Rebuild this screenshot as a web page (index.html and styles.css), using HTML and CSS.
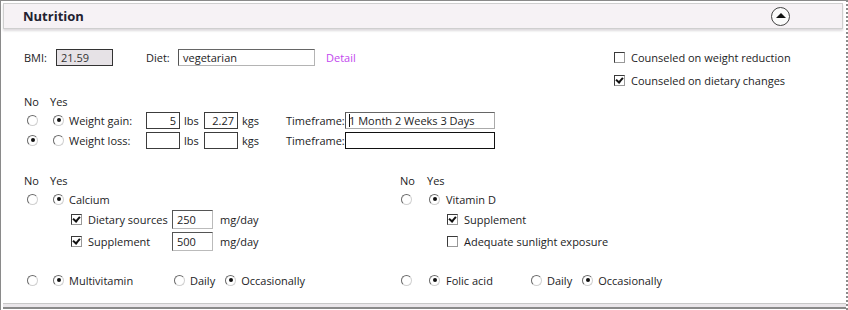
FILE: index.html
```html
<!DOCTYPE html>
<html lang="en">
<head>
  <meta charset="UTF-8">
  <title>Nutrition</title>
  <link rel="stylesheet" href="styles.css">
</head>
<body>
  <div class="frame">
    <div class="panel-head">
      <span class="panel-title">Nutrition</span>
      <span class="collapse-btn"><span class="tri"></span></span>
    </div>

    <div class="panel-body">
      <div class="top-row">
        <span class="lbl lbl-bmi">BMI:</span>
        <span class="field field-bmi">21.59</span>
        <span class="lbl lbl-diet">Diet:</span>
        <span class="field field-diet">vegetarian</span>
        <a class="detail-link">Detail</a>

        <div class="counsel">
          <div class="check-line"><span class="chk"></span>Counseled on weight reduction</div>
          <div class="check-line"><span class="chk on"></span>Counseled on dietary changes</div>
        </div>
      </div>

      <div class="weight">
        <div class="ny-head"><span class="ny-no">No</span><span>Yes</span></div>
        <div class="w-row">
          <span class="rcell"><span class="radio"></span></span>
          <span class="rcell yes"><span class="radio on"></span></span>
          <span class="w-label">Weight gain:</span>
          <span class="field field-num">5</span>
          <span class="unit lbs">lbs</span>
          <span class="field field-num">2.27</span>
          <span class="unit kgs">kgs</span>
          <span class="tf-label">Timeframe:</span>
          <span class="field field-tf light"><span class="caret"></span>1 Month 2 Weeks 3 Days</span>
        </div>
        <div class="w-row">
          <span class="rcell"><span class="radio on"></span></span>
          <span class="rcell yes"><span class="radio"></span></span>
          <span class="w-label">Weight loss:</span>
          <span class="field field-num"></span>
          <span class="unit lbs">lbs</span>
          <span class="field field-num"></span>
          <span class="unit kgs">kgs</span>
          <span class="tf-label">Timeframe:</span>
          <span class="field field-tf dark"></span>
        </div>
      </div>

      <div class="supp">
        <div class="supp-col left">
          <div class="ny-head"><span class="ny-no">No</span><span>Yes</span></div>
          <div class="s-row">
            <span class="rcell"><span class="radio"></span></span>
            <span class="rcell yes"><span class="radio on"></span></span>
            <span>Calcium</span>
          </div>
          <div class="sub-row first">
            <span class="chk on"></span><span class="sub-label">Dietary sources</span>
            <span class="field field-mg">250</span><span class="unit">mg/day</span>
          </div>
          <div class="sub-row">
            <span class="chk on"></span><span class="sub-label">Supplement</span>
            <span class="field field-mg">500</span><span class="unit">mg/day</span>
          </div>
          <div class="s-row freq-row">
            <span class="rcell"><span class="radio"></span></span>
            <span class="rcell yes"><span class="radio on"></span></span>
            <span class="freq-name">Multivitamin</span>
            <span class="radio"></span><span class="opt">Daily</span>
            <span class="radio on"></span><span class="opt">Occasionally</span>
          </div>
        </div>

        <div class="supp-col right">
          <div class="ny-head"><span class="ny-no">No</span><span>Yes</span></div>
          <div class="s-row">
            <span class="rcell"><span class="radio"></span></span>
            <span class="rcell yes"><span class="radio on"></span></span>
            <span>Vitamin D</span>
          </div>
          <div class="sub-row first">
            <span class="chk on"></span><span>Supplement</span>
          </div>
          <div class="sub-row">
            <span class="chk"></span><span>Adequate sunlight exposure</span>
          </div>
          <div class="s-row freq-row">
            <span class="rcell"><span class="radio"></span></span>
            <span class="rcell yes"><span class="radio on"></span></span>
            <span class="freq-name">Folic acid</span>
            <span class="radio"></span><span class="opt">Daily</span>
            <span class="radio on"></span><span class="opt">Occasionally</span>
          </div>
        </div>
      </div>
    </div>

    <div class="panel-foot"></div>
  </div>
</body>
</html>
```

FILE: styles.css
```css
body {
  margin: 0;
  font-family: "Open Sans", "Noto Sans", sans-serif;
  font-size: 11px;
  color: #1c1c24;
  background: #fff;
}

.frame {
  width: 845px;
  height: 309px;
  border-top: 1px solid #8a8a8a;
  border-left: 1px solid #8a8a8a;
  border-right: 2px dotted #8a8a8a;
  position: relative;
  overflow: hidden;
}

.panel-head {
  margin: 2px 3px 0 2px;
  height: 24px;
  border: 1px solid #cfcfcf;
  background: #f6f2f5;
  box-shadow: 0 2px 2px #dedbde;
  display: flex;
  align-items: center;
  justify-content: space-between;
  padding: 0 52px 0 19px;
}

.panel-title {
  font-weight: bold;
  font-size: 13px;
  color: #222230;
}

.collapse-btn {
  width: 17px;
  height: 17px;
  border: 1px solid #444;
  border-radius: 50%;
  background: #fbfbfb;
  display: flex;
  align-items: center;
  justify-content: center;
}

.tri {
  width: 0;
  height: 0;
  border-left: 5px solid transparent;
  border-right: 5px solid transparent;
  border-bottom: 5px solid #111;
  margin-top: -1px;
}

.panel-body {
  padding: 20px 0 0 23px;
}

.top-row {
  display: flex;
  align-items: flex-start;
  height: 42px;
}

.lbl {
  line-height: 17px;
}

.lbl-bmi { width: 32px; }
.lbl-diet { width: 32px; margin-left: 33px; }

.field {
  height: 17px;
  box-sizing: border-box;
  line-height: 15px;
  padding: 0 4px;
  border: 1px solid #3c3c3c;
  background: #fff;
  display: inline-block;
  white-space: nowrap;
  flex: none;
}

.field-bmi {
  width: 57px;
  background: #e6e2e6;
  border-color: #333;
  color: #333;
}

.field-diet {
  width: 137px;
  border-color: #b4b4b4;
  border-left-color: #555;
  border-top-color: #666;
}

.detail-link {
  margin-left: 11px;
  line-height: 17px;
  color: #c247ee;
}

.counsel {
  margin-left: auto;
  width: 232px;
  margin-top: -3px;
}

.check-line {
  display: flex;
  align-items: center;
  height: 23px;
}

.check-line .chk { margin-right: 6px; }

.chk {
  width: 11px;
  height: 11px;
  box-sizing: border-box;
  border: 1px solid #3a3a3a;
  border-right-color: #999;
  border-bottom-color: #999;
  background: #fff;
  display: inline-flex;
  align-items: center;
  justify-content: center;
  flex: none;
}

.chk.on::after {
  content: "";
  width: 5px;
  height: 3px;
  border-left: 2px solid #111;
  border-bottom: 2px solid #111;
  transform: rotate(-50deg);
  margin-top: -2px;
}

.radio {
  width: 11px;
  height: 11px;
  box-sizing: border-box;
  border-radius: 50%;
  border: 1px solid #6a6a6a;
  border-right-color: #d0d0d0;
  border-bottom-color: #d0d0d0;
  background: #fff;
  display: inline-flex;
  align-items: center;
  justify-content: center;
  flex: none;
}

.radio.on::after {
  content: "";
  width: 4px;
  height: 4px;
  border-radius: 50%;
  background: #111;
}

.weight {
  margin-top: 3px;
}

.ny-head {
  display: flex;
  height: 15px;
  line-height: 15px;
}

.ny-no { width: 26px; }

.rcell {
  width: 26px;
  padding-left: 3px;
  box-sizing: border-box;
  display: inline-flex;
  align-items: center;
  flex: none;
}

.rcell.yes { width: 19px; }

.w-row {
  display: flex;
  align-items: center;
  height: 20px;
}

.ny-head + .w-row { margin-top: 1px; }

.w-label { width: 77px; flex: none; }

.field-num {
  width: 34px;
  text-align: right;
  padding: 0 3px;
}

.unit { margin: 0 5px 0 4px; }

.unit.lbs { width: 16px; margin: 0 4px 0 4px; }
.unit.kgs { width: 20px; margin: 0 0 0 4px; }

.tf-label {
  margin-left: 24px;
  width: 59px;
  flex: none;
}

.field-tf {
  width: 150px;
  padding-left: 3px;
}

.field-tf.light {
  border-color: #aaa;
  border-left-color: #555;
  border-top-color: #666;
}

.field-tf.dark {
  border-color: #111;
}

.caret {
  display: inline-block;
  width: 1px;
  height: 13px;
  background: #111;
  vertical-align: -2px;
  margin-right: -1px;
}

.supp {
  display: flex;
  margin-top: 23px;
}

.supp-col.left { width: 376px; }

.supp-col.right .rcell { width: 27px; padding-left: 1px; }
.supp-col.right .rcell.yes { width: 19px; padding-left: 2px; }
.supp-col.right .ny-no { width: 27px; }

.s-row {
  display: flex;
  align-items: center;
  height: 20px;
  margin-top: 1px;
}

.sub-row {
  display: flex;
  align-items: center;
  height: 20px;
  padding-left: 47px;
  margin-top: 2px;
}

.sub-row.first { margin-top: 0; }

.sub-row .chk { margin-right: 6px; }

.sub-label { width: 84px; flex: none; }

.field-mg {
  width: 41px;
  border-color: #bbb;
  border-left-color: #555;
  border-top-color: #555;
  height: 19px;
  line-height: 17px;
}

.sub-row .unit { margin-left: 7px; }

.freq-row { margin-top: 19px; }

.freq-name { width: 105px; flex: none; }

.supp-col.right .freq-name { width: 85px; }

.opt { margin: 0 10px 0 5px; }

.panel-foot {
  position: absolute;
  left: 2px;
  right: 0;
  bottom: 1px;
  height: 3px;
  border-top: 1px solid #c8c8c8;
  border-bottom: 2px solid #8a8a8a;
  background: #eae6ea;
}
```
